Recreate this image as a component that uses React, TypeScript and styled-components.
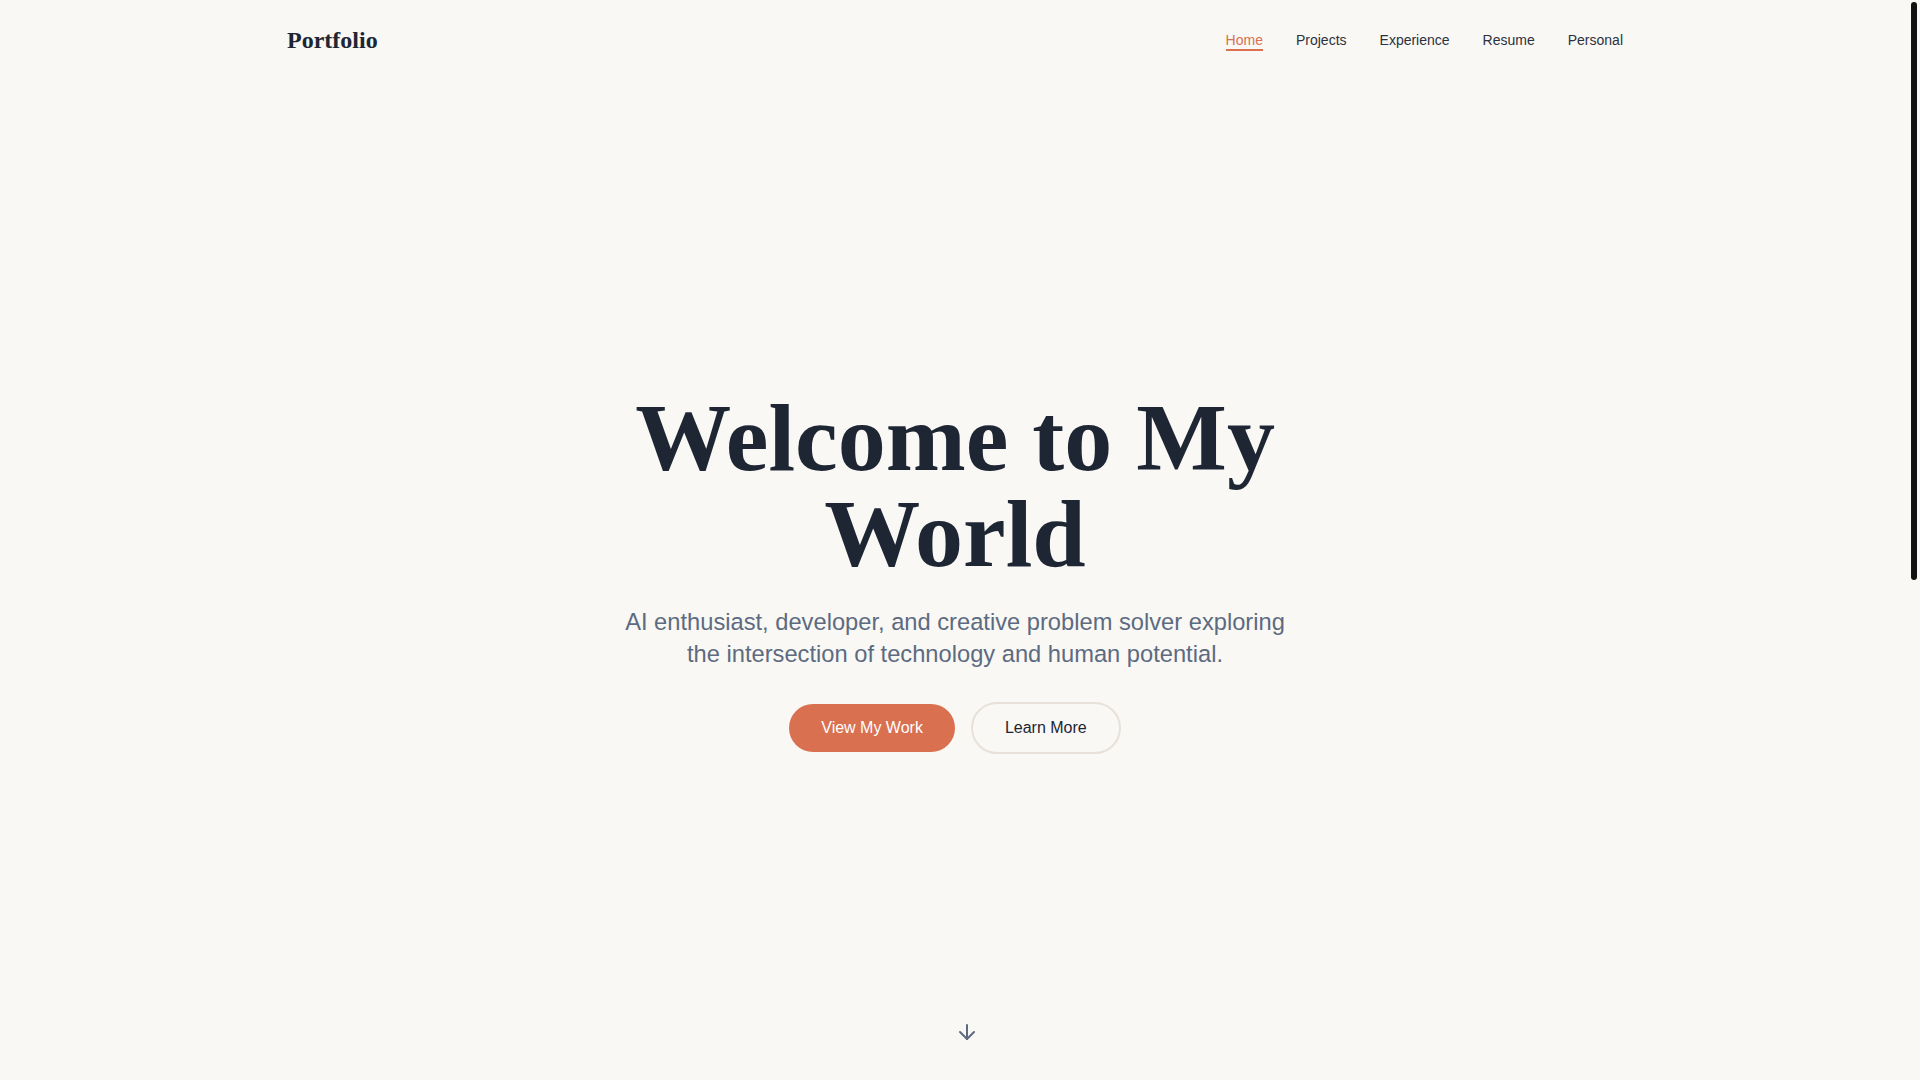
import React from 'react';
import styled, { createGlobalStyle } from 'styled-components';
import { ArrowDown } from 'lucide-react';

const colors = {
  bg: '#f9f8f5',
  ink: '#1e2633',
  navInk: '#2b323d',
  muted: '#5d6b80',
  accent: '#d97050',
  border: '#e7e1d9',
};

const GlobalStyle = createGlobalStyle`
  html, body {
    margin: 0;
    padding: 0;
    background-color: ${colors.bg};
  }

  body {
    font-family: "Liberation Sans", Arial, sans-serif;
    color: ${colors.ink};
  }

  * {
    box-sizing: border-box;
  }
`;

/* leaves room for the slim scrollbar seen on the right edge */
const Page = styled.div`
  padding-right: 10px;
  background-color: ${colors.bg};
`;

const ScrollThumb = styled.div`
  position: fixed;
  top: 2px;
  right: 3px;
  width: 6px;
  height: 578px;
  border-radius: 3px;
  background-color: #111111;
  z-index: 20;
`;

const Header = styled.header`
  position: sticky;
  top: 0;
  z-index: 10;
  background-color: ${colors.bg};
`;

const HeaderInner = styled.div`
  max-width: 1400px;
  margin: 0 auto;
  padding: 24px 32px;
  display: flex;
  align-items: center;
  justify-content: space-between;
`;

const Logo = styled.a`
  font-family: "Liberation Serif", "Times New Roman", serif;
  font-size: 24px;
  line-height: 32px;
  font-weight: 700;
  color: ${colors.ink};
  text-decoration: none;
`;

const Nav = styled.nav`
  display: flex;
  align-items: center;
  gap: 33px;
`;

const NavLink = styled.a<{ $active?: boolean }>`
  position: relative;
  font-size: 14px;
  line-height: 20px;
  color: ${({ $active }) => ($active ? colors.accent : colors.navInk)};
  text-decoration: none;
  cursor: pointer;

  ${({ $active }) =>
    $active &&
    `
    &::after {
      content: '';
      position: absolute;
      left: 0;
      right: 0;
      bottom: -1px;
      height: 2px;
      background-color: ${colors.accent};
    }
  `}
`;

const Hero = styled.section`
  position: relative;
  min-height: calc(100vh - 80px);
  display: flex;
  align-items: center;
  justify-content: center;
  padding: 0 16px 16px;
  text-align: center;
`;

const HeroContent = styled.div`
  width: 100%;
  max-width: 896px;
  display: flex;
  flex-direction: column;
  align-items: center;
`;

const Title = styled.h1`
  margin: 0 0 24px;
  font-family: "Liberation Serif", "Times New Roman", serif;
  font-size: 96px;
  line-height: 1;
  font-weight: 700;
  color: ${colors.ink};
`;

const Subtitle = styled.p`
  margin: 0 0 32px;
  max-width: 672px;
  font-size: 23.7px;
  line-height: 32px;
  color: ${colors.muted};
`;

const Actions = styled.div`
  display: flex;
  align-items: center;
  justify-content: center;
  gap: 16px;
`;

const PillButton = styled.button<{ $variant: 'primary' | 'outline' }>`
  font-family: "Liberation Sans", Arial, sans-serif;
  font-size: 16px;
  line-height: 24px;
  padding: 12px 32px;
  border-radius: 9999px;
  cursor: pointer;
  border: ${({ $variant }) => ($variant === 'outline' ? `2px solid ${colors.border}` : 'none')};
  background-color: ${({ $variant }) => ($variant === 'primary' ? colors.accent : 'transparent')};
  color: ${({ $variant }) => ($variant === 'primary' ? '#ffffff' : colors.ink)};
`;

const ScrollHint = styled.div`
  position: absolute;
  left: 50%;
  bottom: 36px;
  display: flex;
  color: ${colors.muted};
`;

const NextSection = styled.section`
  min-height: 938px;
`;

const links = ['Home', 'Projects', 'Experience', 'Resume', 'Personal'];

export default function App() {
  return (
    <Page>
      <GlobalStyle />
      <ScrollThumb />
      <Header>
        <HeaderInner>
          <Logo>Portfolio</Logo>
          <Nav>
            {links.map((label) => (
              <NavLink key={label} $active={label === 'Home'}>
                {label}
              </NavLink>
            ))}
          </Nav>
        </HeaderInner>
      </Header>

      <Hero>
        <HeroContent>
          <Title>Welcome to My World</Title>
          <Subtitle>
            AI enthusiast, developer, and creative problem solver exploring the intersection of technology and human potential.
          </Subtitle>
          <Actions>
            <PillButton $variant="primary">View My Work</PillButton>
            <PillButton $variant="outline">Learn More</PillButton>
          </Actions>
        </HeroContent>
        <ScrollHint>
          <ArrowDown size={24} strokeWidth={2} />
        </ScrollHint>
      </Hero>

      <NextSection />
    </Page>
  );
}
